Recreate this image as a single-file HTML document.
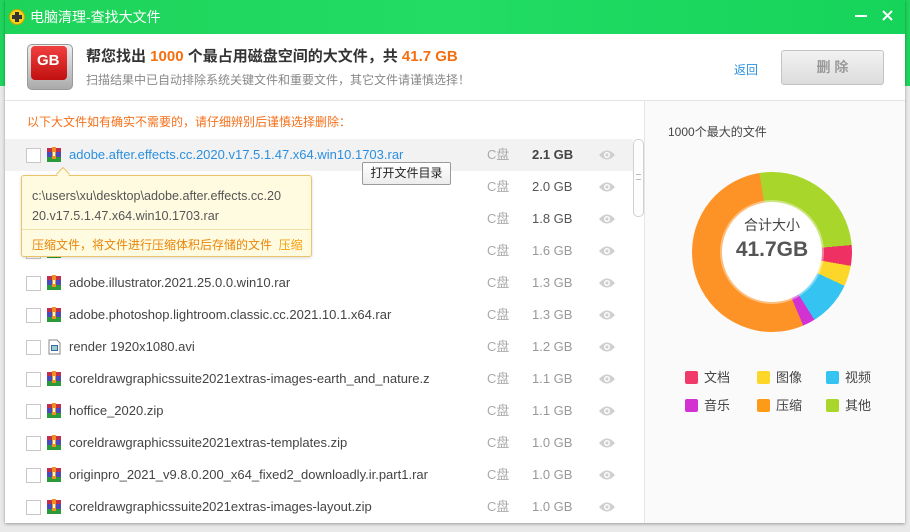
<!DOCTYPE html><html><head><meta charset="utf-8"><style>
*{margin:0;padding:0;box-sizing:border-box}
body{width:910px;height:532px;position:relative;overflow:hidden;background:#e9e9e9;font-family:"Liberation Sans","Noto Sans CJK SC",sans-serif;font-size:12px;color:#333}
.abs{position:absolute}
.bgtop{left:0;top:0;width:910px;height:86px;background:#1fd45c}
.win{left:5px;top:0;width:900px;height:523px;background:#fff;box-shadow:0 1px 3px rgba(0,0,0,.35)}
.title{left:0;top:0;width:900px;height:34px;background:linear-gradient(90deg,#1ed35a,#22dc64 50%,#16d35a)}
.rowhl{background:#f2f2f2}
.row{position:absolute;left:5px;width:628px;height:32px}
.cb{position:absolute;left:21px;top:9px;width:15px;height:15px;border:1px solid #c8c8c8;background:#fff}
.ic{position:absolute;left:41px;top:8px;width:16px;height:16px}
.nm,.dr,.sz{position:absolute;top:8px;font-size:13px;line-height:16px;white-space:nowrap}
.nm{left:64px;color:#444}
.dr{left:482px;color:#aaa}
.sz{left:527px;color:#555}
.eye{position:absolute;left:594px;top:11px}
.lg{position:absolute;width:13px;height:13px;border-radius:2px}
.lt{position:absolute;font-size:13px;color:#444;line-height:16px}
</style></head><body>
<div class="abs bgtop"></div>
<div class="abs win"></div>
<div class="abs title" style="left:5px"></div>
<div class="abs" style="left:9px;top:9px;width:16px;height:16px;border-radius:50%;background:#f3d21b;border:1px solid #c9a400"></div>
<div class="abs" style="left:12px;top:15px;width:10px;height:4px;background:#333"></div>
<div class="abs" style="left:15px;top:12px;width:4px;height:10px;background:#333"></div>
<div class="abs" style="left:30px;top:8px;color:#fff;font-size:14px;line-height:18px">电脑清理-查找大文件</div>
<div class="abs" style="left:855px;top:15px;width:12px;height:2px;background:#fff"></div>
<svg class="abs" style="left:882px;top:10px" width="11" height="11" viewBox="0 0 11 11"><path d="M1 1L10 10M10 1L1 10" stroke="#fff" stroke-width="2"/></svg>
<div class="abs" style="left:27px;top:44px;width:46px;height:46px;border-radius:5px;background:linear-gradient(#eee,#aaa);border:1px solid #999"></div>
<div class="abs" style="left:31px;top:46px;width:36px;height:34px;border-radius:4px;background:linear-gradient(#f04040,#c01010)"></div>
<div class="abs" style="left:37px;top:52px;color:#fff;font-weight:bold;font-size:15px">GB</div>
<div class="abs" style="left:86px;top:47px;font-size:15px;font-weight:bold;color:#333;line-height:20px">帮您找出 <span style="color:#f56f0f">1000</span> 个最占用磁盘空间的大文件，共 <span style="color:#f56f0f">41.7 GB</span></div>
<div class="abs" style="left:86px;top:72px;font-size:12px;color:#888;line-height:16px">扫描结果中已自动排除系统关键文件和重要文件，其它文件请谨慎选择！</div>
<div class="abs" style="left:734px;top:62px;color:#2a8fe0;font-size:12px;line-height:16px">返回</div>
<div class="abs" style="left:781px;top:50px;width:103px;height:35px;border:1px solid #c3c3c3;border-radius:3px;background:linear-gradient(#f2f2f2,#dcdcdc);color:#999;font-size:14px;font-weight:bold;text-align:center;line-height:33px">删 除</div>
<div class="abs" style="left:5px;top:100px;width:900px;height:1px;background:#e3e3e3"></div>
<div class="abs" style="left:27px;top:114px;color:#f5701a;font-size:12px;line-height:16px">以下大文件如有确实不需要的，请仔细辨别后谨慎选择删除：</div>
<div class="abs" style="left:644px;top:101px;width:261px;height:422px;background:#fafafa;border-left:1px solid #e6e6e6"></div>
<div class="abs" style="left:668px;top:124px;font-size:12px;color:#444;line-height:16px">1000个最大的文件</div>
<div class="abs" style="left:692px;top:172px;width:160px;height:160px;border-radius:50%;background:conic-gradient(from -9deg,#a9d62a 0 94deg,#ee3062 94deg 109deg,#fcd72a 109deg 124deg,#35c3f2 124deg 157deg,#d232d2 157deg 166deg,#fd9327 166deg 360deg)"></div>
<div class="abs" style="left:722px;top:202px;width:100px;height:100px;border-radius:50%;background:#fff;box-shadow:0 0 0 2px rgba(255,255,255,.4)"></div>
<div class="abs" style="left:722px;top:216px;width:100px;text-align:center;font-size:14px;color:#444;line-height:18px">合计大小</div>
<div class="abs" style="left:715px;top:237px;width:114px;text-align:center;font-size:21px;font-weight:bold;color:#555;line-height:26px">41.7GB</div>
<div class="lg" style="left:685px;top:371px;background:#f03a6a"></div><div class="lt" style="left:704px;top:370px">文档</div>
<div class="lg" style="left:757px;top:371px;background:#fcd72a"></div><div class="lt" style="left:776px;top:370px">图像</div>
<div class="lg" style="left:826px;top:371px;background:#35c3f2"></div><div class="lt" style="left:845px;top:370px">视频</div>
<div class="lg" style="left:685px;top:399px;background:#d232d2"></div><div class="lt" style="left:704px;top:398px">音乐</div>
<div class="lg" style="left:757px;top:399px;background:#fd9a18"></div><div class="lt" style="left:776px;top:398px">压缩</div>
<div class="lg" style="left:826px;top:399px;background:#a9d62a"></div><div class="lt" style="left:845px;top:398px">其他</div>
<div class="abs" style="left:633px;top:139px;width:11px;height:78px;border:1px solid #d0d0d0;border-radius:5px;background:#fdfdfd"></div>
<div class="abs" style="left:636px;top:174px;width:5px;height:6px;border-top:1px solid #bbb;border-bottom:1px solid #bbb"></div>
<div id="rows"></div>
<script>
var d=[["adobe.after.effects.cc.2020.v17.5.1.47.x64.win10.1703.rar","2.1 GB"],["adobe.after.effects...rar","2.0 GB"],["x","1.8 GB"],["x","1.6 GB"],["adobe.illustrator.2021.25.0.0.win10.rar","1.3 GB"],["adobe.photoshop.lightroom.classic.cc.2021.10.1.x64.rar","1.3 GB"],["render 1920x1080.avi","1.2 GB"],["coreldrawgraphicssuite2021extras-images-earth_and_nature.z","1.1 GB"],["hoffice_2020.zip","1.1 GB"],["coreldrawgraphicssuite2021extras-templates.zip","1.0 GB"],["originpro_2021_v9.8.0.200_x64_fixed2_downloadly.ir.part1.rar","1.0 GB"],["coreldrawgraphicssuite2021extras-images-layout.zip","1.0 GB"]];
var rar='<svg class="ic" viewBox="0 0 16 16"><rect x="1" y="1" width="14" height="4" fill="#c0304a"/><rect x="1" y="5" width="14" height="5" fill="#4a4ab8"/><rect x="1" y="10" width="14" height="5" fill="#2a9a3a"/><rect x="6" y="0" width="4" height="12" fill="#f09020"/><rect x="7" y="5" width="2" height="4" fill="#fff"/></svg>';
var avi='<svg class="ic" viewBox="0 0 16 16"><path d="M3 1h8l3 3v11H3z" fill="#fff" stroke="#888"/><rect x="5" y="6" width="7" height="6" fill="#3a6aa0"/><rect x="6" y="7" width="5" height="4" fill="#9cc"/></svg>';
var eye='<svg class="eye" width="16" height="10" viewBox="0 0 16 10"><path d="M0 5Q8-4 16 5Q8 14 0 5z" fill="#cfcfcf"/><circle cx="8" cy="5" r="3" fill="#fff"/><circle cx="8" cy="5" r="1.6" fill="#cfcfcf"/></svg>';
var h='';
for(var i=0;i<12;i++){var t=139+i*32;var r=d[i];
h+='<div class="row'+(i==0?' rowhl':'')+'" style="top:'+t+'px"><div class="cb"></div>'+(i==6?avi:rar)+'<div class="nm" style="'+(i==0?'color:#2a8fe0':'')+'">'+r[0]+'</div><div class="dr">C盘</div><div class="sz" style="'+(i==0?'font-weight:bold;color:#444':(i>2?'color:#999':''))+'">'+r[1]+'</div>'+eye+'</div>';}
document.getElementById('rows').innerHTML=h;
</script>
<div class="abs" style="left:21px;top:175px;width:291px;height:82px;background:#fffbe0;border:1px solid #e8c46a;border-radius:3px;box-shadow:0 1px 3px rgba(0,0,0,.15)"></div>
<div class="abs" style="left:58px;top:169px;width:10px;height:10px;background:#fffbe0;border-left:1px solid #e8c46a;border-top:1px solid #e8c46a;transform:rotate(45deg)"></div>
<div class="abs" style="left:32px;top:186px;font-size:12.6px;color:#555;line-height:20px;white-space:nowrap">c:\users\xu\desktop\adobe.after.effects.cc.20<br>20.v17.5.1.47.x64.win10.1703.rar</div>
<div class="abs" style="left:22px;top:229px;width:289px;height:1px;background:#f0dfa8"></div>
<div class="abs" style="left:32px;top:237px;font-size:12px;color:#e8860a;line-height:16px">压缩文件，将文件进行压缩体积后存储的文件 &nbsp;<span style="color:#f5a010">压缩</span></div>
<div class="abs" style="left:362px;top:162px;width:89px;height:23px;border:1px solid #9a9a9a;border-radius:2px;background:linear-gradient(#fff,#ececec);font-size:12px;color:#222;text-align:center;line-height:21px">打开文件目录</div>
</body></html>
